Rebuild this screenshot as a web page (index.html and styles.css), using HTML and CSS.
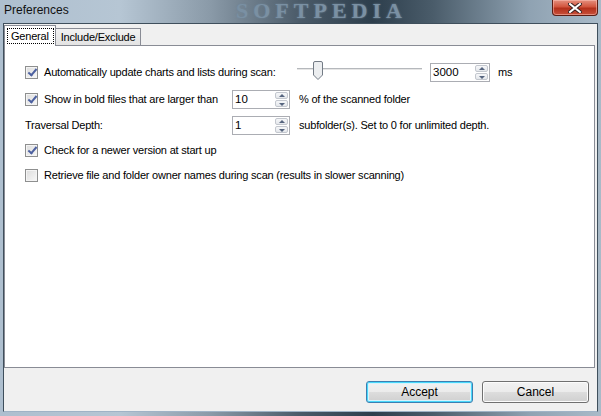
FILE: index.html
```html
<!DOCTYPE html>
<html>
<head>
<meta charset="utf-8">
<link rel="stylesheet" href="styles.css">
</head>
<body>
<div class="window">
  <div class="titlebar">
    <span class="title">Preferences</span>
    <span class="watermark">SOFTPEDIA</span>
    <button class="close" aria-label="Close">
      <svg width="14" height="10" viewBox="0 0 14 10"><path d="M2 1 L12 9 M12 1 L2 9" stroke="#3a2020" stroke-width="4" stroke-linecap="square"/><path d="M2 1 L12 9 M12 1 L2 9" stroke="#fff" stroke-width="2" stroke-linecap="square"/></svg>
    </button>
  </div>
  <div class="client">
    <div class="tabs">
      <div class="tab active"><span class="focus">General</span></div>
      <div class="tab">Include/Exclude</div>
    </div>
    <div class="panel">
      <div class="row r1">
        <label class="lead w1"><span class="cb on"></span>Automatically update charts and lists during scan:</label>
        <div class="slider"><div class="track"></div><svg class="thumb" width="12" height="19" viewBox="0 0 12 19"><path d="M1.5 2 Q1.5 0.5 3 0.5 H9 Q10.5 0.5 10.5 2 V14 L6 18.5 L1.5 14 Z" fill="#eceef0" stroke="#737b85"/></svg></div>
        <div class="spin w60"><span class="val">3000</span><span class="arrows"><span class="up"></span><span class="down"></span></span></div>
        <span class="after ms">ms</span>
      </div>
      <div class="row r2">
        <label class="lead w2"><span class="cb on"></span>Show in bold files that are larger than</label>
        <div class="spin w58"><span class="val">10</span><span class="arrows"><span class="up"></span><span class="down"></span></span></div>
        <span class="after">% of the scanned folder</span>
      </div>
      <div class="row r3">
        <label class="lead w2">Traversal Depth:</label>
        <div class="spin w58"><span class="val">1</span><span class="arrows"><span class="up"></span><span class="down"></span></span></div>
        <span class="after">subfolder(s). Set to 0 for unlimited depth.</span>
      </div>
      <div class="row r4">
        <label class="lead"><span class="cb on"></span>Check for a newer version at start up</label>
      </div>
      <div class="row r5">
        <label class="lead"><span class="cb"></span>Retrieve file and folder owner names during scan (results in slower scanning)</label>
      </div>
    </div>
    <div class="buttons">
      <button class="btn default">Accept</button>
      <button class="btn">Cancel</button>
    </div>
  </div>
</div>
</body>
</html>
```
FILE: styles.css
```css
html, body { margin: 0; padding: 0; }
body {
  width: 601px; height: 416px; overflow: hidden;
  font-family: "Liberation Sans", Arial, sans-serif;
  font-size: 11px; letter-spacing: -0.2px; color: #000;
  background: #2a3640;
}
.window {
  width: 601px; height: 416px;
  display: flex; flex-direction: column;
  background: linear-gradient(90deg, #aebfcf 0%, #b6c6d4 20%, #8a9aa8 35%, #4a5a68 50%, #2d3e4c 62%, #4a5c6a 72%, #8fa2b2 88%, #a9bac8 100%);
  box-sizing: border-box;
}
.titlebar {
  height: 23px; position: relative; flex: none;
}
.title {
  position: absolute; left: 4px; top: 3px;
  font-size: 12px; letter-spacing: 0; color: #111;
}
.watermark {
  position: absolute; left: 236px; top: 1px;
  line-height: 20px;
  font-family: "Liberation Serif", serif; font-weight: bold;
  font-size: 22px; letter-spacing: 5px; color: #7a90a3;
  text-shadow: 0 0 2px #6f8698;
}
.close {
  position: absolute; right: 3px; top: 0; width: 46px; height: 16px;
  border: 1px solid #5b1d14; border-top: none; border-radius: 0 0 4px 4px;
  background: linear-gradient(#e4907f, #d2553e 45%, #b3301b 55%, #c8503a);
  padding: 0; display: flex; align-items: center; justify-content: center;
  box-shadow: inset 0 0 0 1px rgba(255,200,190,0.5);
}
.client {
  flex: 1; margin: 0 3px 4px 3px;
  background: #f0f0f0;
  border: 1px solid #3f4f5c;
  border-bottom-color: #9fb3c6;
  display: flex; flex-direction: column;
  padding: 1px 1px 0 0;
}
.tabs { display: flex; align-items: flex-end; height: 20px; padding-left: 1px; }
.tab {
  height: 17px; box-sizing: border-box; padding: 2px 5px 0 5px;
  border: 1px solid #898c95; border-bottom: none;
  background: linear-gradient(#f2f2f2, #e3e3e3);
  margin-left: -1px;
}
.tab.active {
  background: #fff; position: relative; z-index: 1;
  padding: 2px 1px 0 2px; margin-bottom: -1px; height: 21px;
}
.focus { display: inline-block; border: 1px dotted #000; padding: 1px 4px 1px 3px; }
.panel {
  flex: none; height: 323px; background: #fff;
  border: 1px solid #898c95; margin-right: 1px;
  padding: 16px 0 0 20px; box-sizing: border-box;
}
.row { display: flex; align-items: center; height: 20px; }
.r2 { margin-top: 7px; }
.r3 { margin-top: 6px; }
.r4 { margin-top: 5px; }
.r5 { margin-top: 5px; }
.lead { display: flex; align-items: center; white-space: nowrap; }
.w1 { width: 272px; }
.w2 { width: 207px; }
.cb {
  width: 13px; height: 13px; box-sizing: border-box; margin-right: 6px;
  border: 1px solid #8e8f8f; flex: none; position: relative;
  background: linear-gradient(135deg, #dcdcdc, #f8f8f8);
  box-shadow: inset 0 0 0 1px #f4f4f4;
}
.cb.on::after {
  content: ""; position: absolute; left: 4px; top: 0px;
  width: 3px; height: 7px; border: solid #4d61a0; border-width: 0 2px 2px 0;
  transform: rotate(40deg);
}
.slider { position: relative; width: 125px; height: 20px; margin-right: 8px; }
.track {
  position: absolute; left: 0; right: 0; top: 6px; height: 1px;
  background: #b5b8bc; border-bottom: 1px solid #e6e6e6;
}
.thumb { position: absolute; left: 15px; top: -1px; }
.spin {
  height: 19px; box-sizing: border-box; border: 1px solid #abadb3;
  background: #fff; display: flex; align-items: center; position: relative;
}
.w60 { width: 60px; }
.w58 { width: 58px; }
.val { padding-left: 2px; flex: 1; font-size: 11.5px; letter-spacing: 0; }
.arrows {
  width: 13px; height: 15px; margin-right: 1px; display: flex; flex-direction: column; gap: 1px;
}
.up, .down {
  flex: 1; border: 1px solid #c3c7ce; border-radius: 2px; position: relative;
  background: linear-gradient(#f6f7f9, #e4e7eb);
}
.up::after, .down::after {
  content: ""; position: absolute; left: 3px; width: 0; height: 0;
  border-left: 3px solid transparent; border-right: 3px solid transparent;
}
.up::after { top: 1px; border-bottom: 3px solid #56657f; }
.down::after { top: 2px; border-top: 3px solid #56657f; }
.after { margin-left: 9px; white-space: nowrap; }
.ms { margin-left: 8px; }
.buttons {
  flex: 1; display: flex; justify-content: flex-end; align-items: flex-start;
  gap: 9px; padding: 13px 7px 0 0;
}
.btn {
  width: 107px; height: 22px; font: inherit; font-size: 12px; letter-spacing: 0; color: #000;
  border: 1px solid #707070; border-radius: 3px;
  background: linear-gradient(#f2f2f2 0%, #ebebeb 50%, #dddddd 51%, #cfcfcf 100%);
  box-shadow: inset 0 0 0 1px #fcfcfc;
  padding: 0;
}
.btn.default {
  border-color: #3c7fb1;
  box-shadow: inset 0 0 0 1px #48d8fb, inset 0 0 0 2px #d6f3fc;
}
```
